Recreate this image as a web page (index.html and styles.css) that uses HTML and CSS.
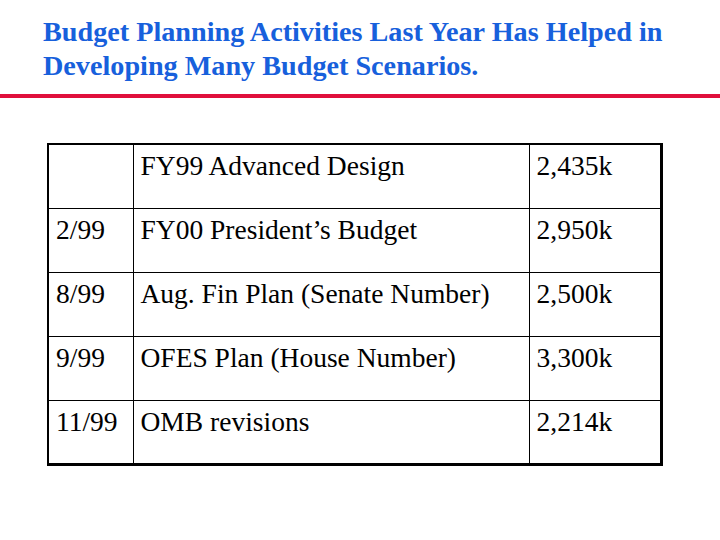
FILE: index.html
```html
<!DOCTYPE html>
<html>
<head>
<meta charset="utf-8">
<link rel="stylesheet" href="styles.css">
</head>
<body>
<header class="head">
  <h1 class="title">Budget Planning Activities Last Year Has Helped in<br>Developing Many Budget Scenarios.</h1>
</header>
<div class="rule"></div>
<table class="grid">
  <tr><td class="c1"></td><td class="c2">FY99 Advanced Design</td><td class="c3">2,435k</td></tr>
  <tr><td class="c1">2/99</td><td class="c2">FY00 President’s Budget</td><td class="c3">2,950k</td></tr>
  <tr><td class="c1">8/99</td><td class="c2">Aug. Fin Plan (Senate Number)</td><td class="c3">2,500k</td></tr>
  <tr><td class="c1">9/99</td><td class="c2">OFES Plan (House Number)</td><td class="c3">3,300k</td></tr>
  <tr><td class="c1">11/99</td><td class="c2">OMB revisions</td><td class="c3">2,214k</td></tr>
</table>
</body>
</html>
```
FILE: styles.css
```css
html, body { margin: 0; padding: 0; background: #fff; }
body { width: 720px; height: 540px; overflow: hidden; font-family: "Liberation Serif", "Times New Roman", serif; }
.head { height: 94px; padding: 15px 0 0 43px; box-sizing: border-box; }
.title {
  margin: 0;
  font-size: 28.2px;
  line-height: 34px;
  font-weight: bold;
  color: #1760dc;
  white-space: nowrap;
}
.rule { height: 4px; background: #e0103c; }
.grid {
  margin: 45px 0 0 47px;
  border-collapse: collapse;
  border: 2px solid #000;
  border-right-width: 3px;
  border-bottom-width: 3px;
}
.grid td {
  border: 1px solid #000;
  height: 64px;
  padding: 5px 7px 0 7px;
  vertical-align: top;
  font-size: 27.5px;
  line-height: 32px;
  color: #000;
  box-sizing: border-box;
  white-space: nowrap;
}
.c1 { width: 85px; }
.c2 { width: 396px; }
.c3 { width: 132px; }
```
